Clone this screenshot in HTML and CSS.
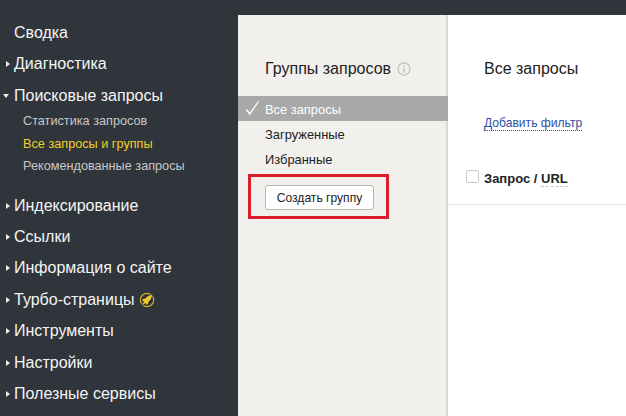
FILE: index.html
```html
<!DOCTYPE html>
<html lang="ru">
<head>
<meta charset="utf-8">
<title>Группы запросов</title>
<link rel="stylesheet" href="styles.css">
</head>
<body>
<div class="app">
  <nav class="sidebar">
    <div class="item"><span class="label">Сводка</span></div>
    <div class="item closed"><span class="label">Диагностика</span></div>
    <div class="item open"><span class="label">Поисковые запросы</span></div>
    <div class="subs">
      <div class="sub">Статистика запросов</div>
      <div class="sub active">Все запросы и группы</div>
      <div class="sub">Рекомендованные запросы</div>
    </div>
    <div class="item closed"><span class="label">Индексирование</span></div>
    <div class="item closed"><span class="label">Ссылки</span></div>
    <div class="item closed"><span class="label">Информация о сайте</span></div>
    <div class="item closed"><span class="label">Турбо-страницы</span>
      <svg class="rocket" width="16" height="16" viewBox="0 0 16 16"><circle cx="8" cy="8" r="6.700" fill="none" stroke="#cdae2a" stroke-width="1.200"/><path d="M1 15L5 6.500 11 2.500 13.500 2.500 13.500 5 9.500 11z" fill="#30353b"/><path d="M13 3C10.300 3.200 8.200 4.300 6.500 6.400L4 7.100 3.200 9 5.200 9.300 2.800 13.200 6.800 10.900 7 12.800 8.900 12 9.600 9.500C11.700 7.800 12.800 5.700 13 3z" fill="#eccb2c"/></svg>
    </div>
    <div class="item closed"><span class="label">Инструменты</span></div>
    <div class="item closed"><span class="label">Настройки</span></div>
    <div class="item closed"><span class="label">Полезные сервисы</span></div>
  </nav>
  <div class="main">
    <div class="topbar"></div>
    <div class="panes">
      <section class="groups">
        <h2 class="groups-title">Группы запросов
          <svg class="info" width="14" height="14" viewBox="0 0 14 14"><circle cx="7" cy="7" r="6" fill="none" stroke="#c4c4c0" stroke-width="1.300"/><rect x="6.200" y="6" width="1.600" height="4.500" fill="#c4c4c0"/><rect x="6.200" y="3.400" width="1.600" height="1.600" fill="#c4c4c0"/></svg>
        </h2>
        <div class="group selected">
          <svg class="check" width="16" height="16" viewBox="0 0 16 16"><path d="M1.500 9.500l3.200 4.500L13.500 1.500" fill="none" stroke="#fff" stroke-width="1.300"/></svg>
          Все запросы</div>
        <div class="group">Загруженные</div>
        <div class="group">Избранные</div>
        <div class="create-wrap"><button class="create">Создать группу</button></div>
      </section>
      <section class="content">
        <h2 class="content-title">Все запросы</h2>
        <div class="filter-row"><a class="filter">Добавить фильтр</a></div>
        <div class="table-head"><span class="box"></span><span class="col">Запрос / <span class="url">URL</span></span></div>
      </section>
    </div>
  </div>
</div>
</body>
</html>
```
FILE: styles.css
```css
* { box-sizing: border-box; }
html, body { margin: 0; padding: 0; }
body {
  width: 626px;
  height: 416px;
  overflow: hidden;
  font-family: "Liberation Sans", Arial, sans-serif;
  background: #fff;
}
.app { display: flex; height: 416px; }
.sidebar {
  width: 238px;
  flex: none;
  background: #30353b;
  padding-top: 21px;
  color: #fff;
}
.item {
  height: 31.400px;
  padding-left: 14px;
  font-size: 16px;
  line-height: 24px;
  color: #f4f4f4;
  position: relative;
  display: flex;
  align-items: flex-start;
}
.closed::before {
  content: "";
  position: absolute;
  left: 6px;
  top: 9px;
  border-left: 4px solid #eee;
  border-top: 3px solid transparent;
  border-bottom: 3px solid transparent;
}
.open::before {
  content: "";
  position: absolute;
  left: 3px;
  top: 10px;
  border-top: 4px solid #eee;
  border-left: 3.500px solid transparent;
  border-right: 3.500px solid transparent;
}
.subs { margin: -5px 0 16px; }
.sub {
  height: 22.500px;
  padding-left: 23px;
  font-size: 12.700px;
  line-height: 22px;
  color: #c6c8ca;
}
.sub.active { color: #f2cf26; }
.rocket { margin: 4px 0 0 4px; }
.main { flex: 1; display: flex; flex-direction: column; min-width: 0; }
.topbar { height: 15px; background: #30353b; flex: none; }
.panes { flex: 1; display: flex; }
.groups {
  width: 210px;
  flex: none;
  background: #f1f0ed;
  border-right: 2px solid #d9d8d4;
  padding-top: 42px;
}
.groups-title {
  margin: 0 0 15px;
  padding-left: 27px;
  font-weight: 400;
  font-size: 16px;
  line-height: 24px;
  color: #222;
  display: flex;
  align-items: center;
  gap: 6px;
}
.group {
  height: 25px;
  padding-left: 27px;
  font-size: 12.900px;
  line-height: 27px;
  color: #222;
  position: relative;
}
.group.selected { background: #a9a9a7; color: #fff; margin-right: -2px; }
.check { position: absolute; left: 7px; top: 4px; }
.create-wrap {
  width: 141px;
  height: 45px;
  margin: 3px 0 0 10px;
  border: 3px solid #da1f2b;
  padding: 8px 0 0 14px;
}
.create {
  display: block;
  width: 109px;
  height: 25px;
  padding: 0;
  font-family: inherit;
  font-size: 12.100px;
  color: #222;
  background: #fff;
  border: 1px solid #b5b5b1;
  border-radius: 3px;
}
.content { flex: 1; padding-top: 42px; }
.content-title {
  margin: 0;
  padding-left: 36px;
  font-weight: 400;
  font-size: 16px;
  line-height: 24px;
  color: #222;
}
.filter-row { padding: 31px 0 0 36px; line-height: 20px; height: 51px; }
.filter {
  font-size: 12.100px;
  color: #2c4fa3;
  border-bottom: 1px dotted #2c4fa3;
}
.table-head {
  margin-top: 37px;
  height: 36px;
  display: flex;
  align-items: flex-start;
  border-bottom: 1px solid #e2e2e0;
  padding-left: 18px;
  gap: 5px;
}
.box {
  width: 13px;
  height: 13px;
  margin-top: 1px;
  background: #fff;
  border: 1px solid #c9c9c9;
  border-radius: 2px;
}
.col { font-size: 13px; font-weight: 700; color: #222; line-height: 19px; }
.url { border-bottom: 1px dashed #c8c8c8; }
```
